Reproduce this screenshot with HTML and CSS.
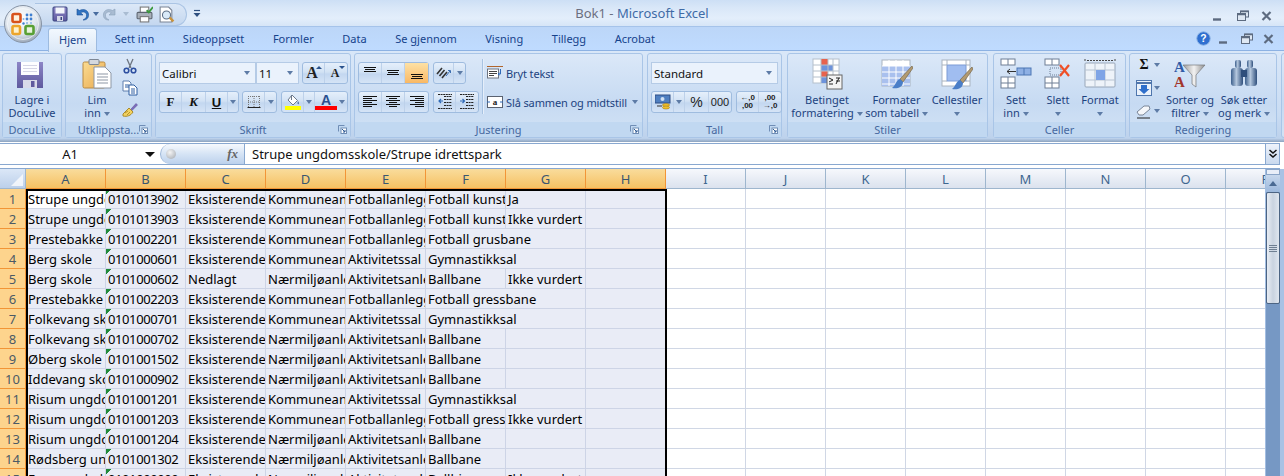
FILE: index.html
```html
<!DOCTYPE html>
<html lang="nb">
<head>
<meta charset="utf-8">
<title>Bok1 - Microsoft Excel</title>
<link rel="stylesheet" href="styles.css">
</head>
<body>
<svg class="defs" aria-hidden="true">
  <defs>
    <radialGradient id="orb" cx="45%" cy="35%" r="70%"><stop offset="0" stop-color="#ffffff"/><stop offset=".6" stop-color="#dfe6ee"/><stop offset="1" stop-color="#8f9db0"/></radialGradient>
    <linearGradient id="disk" x1="0" y1="0" x2="0" y2="1"><stop offset="0" stop-color="#8c85c6"/><stop offset="1" stop-color="#5f5a9e"/></linearGradient>
    <linearGradient id="clip" x1="0" y1="0" x2="1" y2="1"><stop offset="0" stop-color="#fbdc92"/><stop offset="1" stop-color="#e9a94e"/></linearGradient>
    <linearGradient id="steel" x1="0" y1="0" x2="1" y2="0"><stop offset="0" stop-color="#3c5f8c"/><stop offset=".45" stop-color="#b5c8de"/><stop offset="1" stop-color="#2f4f7c"/></linearGradient>
    <linearGradient id="funnel" x1="0" y1="0" x2="1" y2="0"><stop offset="0" stop-color="#9a9a9a"/><stop offset=".5" stop-color="#f2f2f2"/><stop offset="1" stop-color="#8d8d8d"/></linearGradient>
    <symbol id="a-top" viewBox="0 0 16 16"><path d="M2 2.500h12M3 4.500h10M2 6.500h12" stroke="#111" fill="none"/></symbol>
    <symbol id="a-mid" viewBox="0 0 16 16"><path d="M2 5.500h12M3 7.500h10M2 9.500h12" stroke="#111" fill="none"/></symbol>
    <symbol id="a-bot" viewBox="0 0 16 16"><path d="M2 9.500h12M3 11.500h10M2 13.500h12" stroke="#111" fill="none"/></symbol>
    <symbol id="a-left" viewBox="0 0 16 16"><path d="M1 2.500h14M1 4.500h9M1 6.500h14M1 8.500h9M1 10.500h14M1 12.500h9" stroke="#111" fill="none"/></symbol>
    <symbol id="a-center" viewBox="0 0 16 16"><path d="M1 2.500h14M4 4.500h8M1 6.500h14M4 8.500h8M1 10.500h14M4 12.500h8" stroke="#111" fill="none"/></symbol>
    <symbol id="a-right" viewBox="0 0 16 16"><path d="M1 2.500h14M6 4.500h9M1 6.500h14M6 8.500h9M1 10.500h14M6 12.500h9" stroke="#111" fill="none"/></symbol>
    <symbol id="launch" viewBox="0 0 9 9"><path d="M.5.500h6M.5.500v6" stroke="#6f8db5" fill="none"/><rect x="3" y="3" width="5.500" height="5.500" fill="#fff" stroke="#6f8db5"/><path d="M4 4l3 3M7 5v2H5" stroke="#2e5a94" fill="none"/></symbol>
    <symbol id="min" viewBox="0 0 14 12"><path d="M1 9.500h8" stroke="#5d6b80" stroke-width="2.400"/></symbol>
    <symbol id="rest" viewBox="0 0 14 12"><rect x="4.500" y="1" width="8" height="6" fill="#dfe8f3" stroke="#5d6b80"/><rect x="1.500" y="3.500" width="8" height="7" fill="#dfe8f3" stroke="#5d6b80"/><path d="M1.500 4.500h8M4.500 1.500h8" stroke="#5d6b80" stroke-width="1.400"/></symbol>
    <symbol id="close" viewBox="0 0 14 12"><path d="M2.500 2l8 8M10.500 2l-8 8" stroke="#5d6b80" stroke-width="2.200"/></symbol>
  </defs>
</svg>

<div class="app">
  <svg class="orb" viewBox="0 0 40 40" aria-hidden="true">
    <circle cx="20" cy="20" r="18.500" fill="url(#orb)" stroke="#8794a6"/>
    <circle cx="20" cy="20" r="15.500" fill="none" stroke="#f7f9fb" stroke-opacity=".7"/>
    <rect x="9.500" y="10" width="8" height="8" rx="1.500" fill="#fff2dd" stroke="#d8521b" stroke-width="2.600"/>
    <rect x="9.500" y="22" width="7.500" height="8" rx="1.500" fill="#fff2cc" stroke="#eda52a" stroke-width="2.600"/>
    <rect x="22.500" y="22" width="8" height="8" rx="1.500" fill="#e8f3dc" stroke="#58a034" stroke-width="2.600"/>
    <g fill="#3f7fd0"><circle cx="24" cy="11" r="1.400"/><circle cx="28" cy="11" r="1.400"/><circle cx="24" cy="15" r="1.400"/><circle cx="28" cy="15" r="1.400"/><circle cx="20.500" cy="19.500" r="1.200"/></g>
    <g fill="#89b4e0"><circle cx="20.500" cy="15" r="1"/><circle cx="24" cy="19" r="1"/><circle cx="28" cy="19" r="1"/></g>
  </svg>

  <header class="titlebar">
    <div class="title-left">
      <div class="qat">
        <svg class="ic16" viewBox="0 0 16 16"><rect x="1" y="1" width="14" height="14" rx="1" fill="url(#disk)" stroke="#38437f"/><rect x="3.500" y="1.500" width="9" height="6" fill="#f3f5fb"/><rect x="5" y="10" width="6" height="5" fill="#d5d8e8"/><rect x="8.500" y="11" width="1.500" height="3" fill="#38437f"/></svg>
        <svg class="ic16 q-undo" viewBox="0 0 16 16"><path d="M3 3v6h6L6.700 6.800C9 5 12 6 12.500 8.500 13 11 11.500 13 9 14c4 .2 6-2.500 5.500-6C14 4 9.500 2.500 5.500 4.500z" fill="#2f74c4" stroke="#1c4f91" stroke-width=".6"/></svg>
        <i class="arr q-a"></i>
        <svg class="ic16 q-redo" viewBox="0 0 16 16"><path d="M13 3v6H7l2.300-2.200C7 5 4 6 3.500 8.500 3 11 4.500 13 7 14 3 14.200 1 11.500 1.500 8 2 4 6.500 2.500 10.500 4.500z" fill="#a9bcd2" stroke="#8ba1ba" stroke-width=".6"/></svg>
        <i class="arr arr-off q-a"></i>
        <svg class="ic16 q-print" viewBox="0 0 16 16"><rect x="4" y="1" width="8" height="6" fill="#fff" stroke="#777"/><rect x="1" y="6" width="14" height="6" rx="1" fill="#a9b0ba" stroke="#5d6570"/><rect x="4" y="10" width="8" height="5" fill="#fff" stroke="#777"/><path d="M10 4l2 2 4-5" stroke="#3d9a3d" stroke-width="1.800" fill="none"/></svg>
        <svg class="ic16 q-prev" viewBox="0 0 16 16"><path d="M2 1h8l3 3v11H2z" fill="#fff" stroke="#7a8494"/><circle cx="8" cy="8.500" r="3.800" fill="#d9eaf9" stroke="#5d6f86"/><path d="M11 11l3.500 3.500" stroke="#c9933b" stroke-width="2.200"/></svg>
      </div>
      <svg class="q-custom" viewBox="0 0 8 10"><path d="M1 1.500h6" stroke="#2d4f80" stroke-width="1.200"/><path d="M.5 4h7L4 8z" fill="#2d4f80"/></svg>
    </div>
    <h1 class="title"><span class="t-doc">Bok1</span> <span class="t-sep">-</span> <span class="t-app">Microsoft Excel</span></h1>
    <div class="win">
      <svg class="wc"><use href="#min"/></svg>
      <svg class="wc"><use href="#rest"/></svg>
      <svg class="wc"><use href="#close"/></svg>
    </div>
  </header>

  <nav class="tabs">
    <a class="tab tab-on">Hjem</a>
    <a class="tab">Sett inn</a>
    <a class="tab">Sideoppsett</a>
    <a class="tab">Formler</a>
    <a class="tab">Data</a>
    <a class="tab">Se gjennom</a>
    <a class="tab">Visning</a>
    <a class="tab">Tillegg</a>
    <a class="tab">Acrobat</a>
    <div class="tabs-right">
      <svg class="help" viewBox="0 0 16 16"><circle cx="8" cy="8" r="7.200" fill="#2f6fd0" stroke="#8fb4e4"/><text x="8" y="12" class="help-q">?</text></svg>
      <svg class="wc"><use href="#min"/></svg>
      <svg class="wc"><use href="#rest"/></svg>
      <svg class="wc"><use href="#close"/></svg>
    </div>
  </nav>

  <section class="ribbon">
    <div class="group g-docu">
      <div class="gbody">
        <div class="big w-full">
          <svg class="bigic" viewBox="2 -1 32 32"><path d="M3 3h26v26H3z" fill="url(#disk)"/><rect x="7" y="3" width="18" height="13" fill="#fdfdff"/><path d="M9 6.500h14M9 9.500h14M9 12.500h14" stroke="#d5d5e6"/><rect x="9" y="21" width="14" height="8" fill="#d9dbe9"/><rect x="17" y="22" width="3.500" height="6" fill="#5f5a9e"/></svg>
          <span>Lagre i</span><span>DocuLive</span>
        </div>
      </div>
      <div class="glabel">DocuLive</div>
    </div>

    <div class="group g-clip">
      <div class="gbody">
        <div class="big w-paste">
          <svg class="bigic" viewBox="0 0 32 32"><rect x="2" y="4" width="22" height="26" rx="1.500" fill="url(#clip)" stroke="#b98a43"/><rect x="8" y="1.500" width="10" height="5" rx="1" fill="#d4d8de" stroke="#7d8794"/><path d="M13 9h11l6 6v15H13z" fill="#fff" stroke="#8d97a5"/><path d="M16 16h11M16 19h11M16 22h11M16 25h11" stroke="#8d97a5"/></svg>
          <span>Lim</span><span>inn <i class="arr"></i></span>
        </div>
        <div class="smalls s-clip">
          <svg class="ic16" viewBox="0 0 16 16"><path d="M5 1l4 9M11 1L7 10" stroke="#6d7580" stroke-width="1.300"/><circle cx="4.500" cy="12.500" r="2.300" fill="none" stroke="#2d4fa0" stroke-width="1.600"/><circle cx="11.500" cy="12.500" r="2.300" fill="none" stroke="#2d4fa0" stroke-width="1.600"/></svg>
          <svg class="ic16" viewBox="0 0 16 16"><path d="M1 1h6l2 2v8H1z" fill="#fff" stroke="#5e7fae"/><path d="M3 5h4M3 7h4" stroke="#2f5ea2"/><path d="M7 5h5l3 3v7H7z" fill="#fff" stroke="#2f5ea2"/><path d="M9 9h4M9 11h4M9 13h4" stroke="#2f5ea2"/></svg>
          <svg class="ic16" viewBox="0 0 16 16"><path d="M9 7L14 1.500l1.500 1.500L10 8.500z" fill="#7c6cbc" stroke="#54468f" stroke-width=".5"/><path d="M1 12l6-6 4 4c-2 3.500-6 5-10 4z" fill="#f3d25f" stroke="#a98a2c"/><path d="M3 11l3-2M5 13l3-3" stroke="#b5922f"/></svg>
        </div>
      </div>
      <div class="glabel">Utklippsta...<svg class="launch"><use href="#launch"/></svg></div>
    </div>

    <div class="group g-font">
      <div class="gbody rows">
        <div class="row">
          <div class="combo c-font"><span>Calibri</span><i class="arr"></i></div>
          <div class="combo c-size"><span>11</span><i class="arr"></i></div>
          <div class="bgroup bg-ml3">
            <div class="btn w22 grow">A<i class="up"></i></div>
            <div class="btn w22 shrink">A<i class="dn"></i></div>
          </div>
        </div>
        <div class="row">
          <div class="bgroup">
            <div class="btn w22 bold">F</div>
            <div class="btn w24 ital">K</div>
            <div class="btn w22 under">U</div>
            <div class="btn w10"><i class="arr"></i></div>
          </div>
          <div class="bgroup bg-ml3">
            <div class="btn w22"><svg class="ic16" viewBox="0 0 16 16"><path d="M2.500 2v11M8 2v11M13.500 2v11M2 2.500h12M2 8h12" stroke="#777" stroke-dasharray="1 1" fill="none"/><path d="M1.500 13.500h13" stroke="#222"/></svg></div>
            <div class="btn w11"><i class="arr"></i></div>
          </div>
          <div class="bgroup bg-ml4">
            <div class="btn w22"><svg class="ic16" viewBox="0 0 16 16"><path d="M7 1l5.500 5.500L8 11 3 6z" fill="#fff" stroke="#6d7a8c"/><path d="M6.500 1v5" stroke="#6d7a8c"/><path d="M13 7c1 1.500 1.500 2.500.5 3.300-1 .3-1.500-1.300-.5-3.300z" fill="#5175a8"/><rect x="0" y="12" width="16" height="4" fill="#ffff00"/></svg></div>
            <div class="btn w11"><i class="arr"></i></div>
            <div class="btn w22 fcolor">A</div>
            <div class="btn w10"><i class="arr"></i></div>
          </div>
        </div>
      </div>
      <div class="glabel">Skrift<svg class="launch"><use href="#launch"/></svg></div>
    </div>

    <div class="group g-align">
      <div class="gbody align-body">
        <div class="rows r-flat">
          <div class="row">
            <div class="bgroup">
              <div class="btn w23"><svg class="ic16"><use href="#a-top"/></svg></div>
              <div class="btn w23"><svg class="ic16"><use href="#a-mid"/></svg></div>
              <div class="btn w23 btn-on"><svg class="ic16"><use href="#a-bot"/></svg></div>
            </div>
            <div class="bgroup bg-ml4">
              <div class="btn w20"><svg class="ic16" viewBox="0 0 16 16"><g stroke="#333" stroke-width="1.600"><path d="M1 9l5-6M3.500 11l5-6M6 13l5-6"/></g><path d="M10 11l4-5M12 5.500h2.500V8" stroke="#3a6db0" fill="none"/></svg></div>
              <div class="btn w11"><i class="arr"></i></div>
            </div>
          </div>
          <div class="row">
            <div class="bgroup">
              <div class="btn w23"><svg class="ic16"><use href="#a-left"/></svg></div>
              <div class="btn w23"><svg class="ic16"><use href="#a-center"/></svg></div>
              <div class="btn w23"><svg class="ic16"><use href="#a-right"/></svg></div>
            </div>
            <div class="bgroup bg-ml4">
              <div class="btn w22"><svg class="ic16" viewBox="0 0 16 16"><path d="M7 2.500h8M7 5.500h8M7 8.500h8M7 11.500h8M1 .5h14M1 14.500h14" stroke="#222" stroke-dasharray="2 .6"/><path d="M6 7H2M4 5L2 7l2 2" stroke="#2f6ab8" fill="none" stroke-width="1.200"/></svg></div>
              <div class="btn w22"><svg class="ic16" viewBox="0 0 16 16"><path d="M7 2.500h8M7 5.500h8M7 8.500h8M7 11.500h8M1 .5h14M1 14.500h14" stroke="#222" stroke-dasharray="2 .6"/><path d="M1 7h4M3.500 5l2 2-2 2" stroke="#2f6ab8" fill="none" stroke-width="1.200"/></svg></div>
            </div>
          </div>
        </div>
        <div class="vsep"></div>
        <div class="rows r-flat">
          <div class="row wide"><svg class="ic16" viewBox="0 0 16 16"><path d="M0 1.500h16" stroke="#b1652c"/><rect x=".5" y="4" width="11" height="9" fill="#fff" stroke="#6f7580"/><path d="M2 6.500h8M2 8.500h8M2 10.500h5" stroke="#444"/><path d="M13.500 4v5h-2M12.500 8l-1.500 1 1.500 1" stroke="#2f6ab8" fill="none"/></svg><span class="lab">Bryt tekst</span></div>
          <div class="row wide"><svg class="ic16" viewBox="0 0 16 16"><rect x=".5" y="2.500" width="15" height="11" fill="#fff" stroke="#5a6270"/><text x="8" y="11" class="merge-a">a</text><path d="M0 8h3M13 8h3" stroke="#2f6ab8"/></svg><span class="lab">Slå sammen og midtstill</span><i class="arr lab-arr"></i></div>
        </div>
      </div>
      <div class="glabel">Justering<svg class="launch"><use href="#launch"/></svg></div>
    </div>

    <div class="group g-num">
      <div class="gbody rows">
        <div class="row"><div class="combo c-num"><span>Standard</span><i class="arr"></i></div></div>
        <div class="row">
          <div class="bgroup">
            <div class="btn w22"><svg class="ic16" viewBox="0 0 16 16"><rect x="0" y="1" width="15" height="8" fill="#4f7fc0" stroke="#2e4f86"/><circle cx="7.500" cy="5" r="2" fill="#cfe0f3"/><ellipse cx="11" cy="11" rx="3.500" ry="1.500" fill="#f1c12f" stroke="#a47b12" stroke-width=".6"/><ellipse cx="11" cy="13.500" rx="3.500" ry="1.500" fill="#f1c12f" stroke="#a47b12" stroke-width=".6"/><path d="M2 12h5" stroke="#333"/></svg></div>
            <div class="btn w11"><i class="arr"></i></div>
            <div class="btn w24 sym">%</div>
            <div class="btn w22 sym sym-s">000</div>
          </div>
          <div class="bgroup bg-ml4">
            <div class="btn w22 dec"><span>←,0</span><span>,00</span></div>
            <div class="btn w22 dec"><span>,00</span><span>→,0</span></div>
          </div>
        </div>
      </div>
      <div class="glabel">Tall<svg class="launch"><use href="#launch"/></svg></div>
    </div>

    <div class="group g-style">
      <div class="gbody gb-style">
        <div class="big w-cond">
          <svg class="bigic" viewBox="0 0 32 32"><g fill="#fff" stroke="#b5c0cc"><rect x="2" y="1" width="26" height="24"/></g><path d="M10 1h7v6h-7zM10 13h7v6h-7z" fill="#e8624d"/><path d="M10 7h12v6H10zM10 19h7v6h-7z" fill="#6d93dc"/><path d="M2 7h26M2 13h26M2 19h26M10 1v24M17 1v24M22 1v24" stroke="#b5c0cc" fill="none"/><rect x="16" y="17" width="15" height="14" fill="#f4f4f4" stroke="#666"/><path d="M18 20l4 2-4 2M18 26h4M25 20h4M25 23h4M25 26l3-6" stroke="#222" fill="none"/></svg>
          <span>Betinget</span><span>formatering <i class="arr"></i></span>
        </div>
        <div class="big w-tab">
          <svg class="bigic" viewBox="0 0 32 32"><rect x="1" y="2" width="28" height="26" fill="#fff" stroke="#aab4c0"/><rect x="1" y="8" width="28" height="20" fill="#a9c0ee"/><path d="M1 8h28M1 14h28M1 20h28M1 26h28M8 2v26M15 2v26M22 2v26" stroke="#fff"/><path d="M31 8L19 21l3 3L32 10z" fill="#b29a72" stroke="#6c5a3a" stroke-width=".6"/><path d="M11 30c5 1 11-.5 11-6l-3-3c-4 1-4 6-8 9z" fill="#4a7ec8"/></svg>
          <span>Formater</span><span>som tabell <i class="arr"></i></span>
        </div>
        <div class="big w-cell">
          <svg class="bigic" viewBox="0 0 32 32"><rect x="1" y="2" width="28" height="26" fill="#fff" stroke="#aab4c0"/><rect x="6" y="7" width="19" height="16" fill="#a0bdf0" stroke="#7d9cd6"/><path d="M1 7h5M25 7h4M1 23h5M25 23h4M6 2v5M25 2v5" stroke="#aab4c0"/><path d="M31 9L19 22l3 3L32 11z" fill="#b29a72" stroke="#6c5a3a" stroke-width=".6"/><path d="M11 31c5 1 11-.5 11-6l-3-3c-4 1-4 6-8 9z" fill="#4a7ec8"/></svg>
          <span>Cellestiler</span><span><i class="arr"></i></span>
        </div>
      </div>
      <div class="glabel">Stiler</div>
    </div>

    <div class="group g-cell">
      <div class="gbody gb-cell">
        <div class="big w42">
          <svg class="bigic" viewBox="0 0 32 32"><g fill="#fff" stroke="#6f7f95"><rect x="1" y="1" width="14" height="6"/><rect x="1" y="19" width="14" height="11"/></g><path d="M8 1v6M8 19v11M1 25h14" stroke="#6f7f95"/><rect x="17" y="10" width="14" height="7" fill="#8eb0e4" stroke="#4c76b4"/><path d="M24 10v7" stroke="#4c76b4"/><path d="M16 13.500H7M10 11l-3 2.500 3 2.500" stroke="#333" fill="none"/></svg>
          <span>Sett</span><span>inn <i class="arr"></i></span>
        </div>
        <div class="big w42">
          <svg class="bigic" viewBox="0 0 32 32"><g fill="#fff" stroke="#6f7f95"><rect x="3" y="1" width="14" height="6"/><rect x="3" y="19" width="14" height="11"/></g><path d="M10 1v6M10 19v11M3 25h14" stroke="#6f7f95"/><path d="M8 10h11v7H8z" fill="none" stroke="#6f7f95" stroke-dasharray="1 1"/><path d="M18 7l9 11M27 7l-9 11" stroke="#ef4f27" stroke-width="2.200"/></svg>
          <span>Slett</span><span><i class="arr"></i></span>
        </div>
        <div class="big w42">
          <svg class="bigic" viewBox="0 0 32 32"><path d="M1 1v3M31 1v3M3 2.500h26" stroke="#444" stroke-dasharray="2 1"/><rect x="1" y="5" width="30" height="24" rx="1" fill="#eef3f9" stroke="#98a6b8"/><path d="M1 12h30M1 22h30M11 5v24M21 5v24" stroke="#b7c3d2"/><rect x="12" y="12" width="9" height="10" fill="#7fa4e6"/></svg>
          <span>Format</span><span><i class="arr"></i></span>
        </div>
      </div>
      <div class="glabel">Celler</div>
    </div>

    <div class="group g-edit">
      <div class="gbody gb-edit">
        <div class="smalls s-edit">
          <div class="sm"><span class="sigma">Σ</span><i class="arr"></i></div>
          <div class="sm"><svg class="ic16" viewBox="0 0 16 16"><rect x=".5" y=".5" width="15" height="15" fill="#eaf1fa" stroke="#4f76ad"/><path d="M.5 3h15" stroke="#4f76ad" stroke-width="2"/><path d="M5 5h6v4h2.500L8 14 2.500 9H5z" fill="#2f6fcb"/></svg><i class="arr"></i></div>
          <div class="sm"><svg class="ic16" viewBox="0 0 16 16"><path d="M1 9l7-6h5l1 3-7 6H3z" fill="#f5f7fa" stroke="#7a8698"/><path d="M1 15h13" stroke="#222"/></svg><i class="arr"></i></div>
        </div>
        <div class="big w-sort">
          <svg class="bigic" viewBox="0 0 32 32"><text x="0" y="14" class="sort-a">A</text><text x="0" y="29" class="sort-z">A</text><path d="M9 7h22l-9 10v12l-4-3v-9z" fill="url(#funnel)" stroke="#77797c" stroke-width=".7"/></svg>
          <span>Sorter og</span><span>filtrer <i class="arr"></i></span>
        </div>
        <div class="big w-find">
          <svg class="bigic" viewBox="0 0 32 32"><rect x="7" y="2" width="6" height="8" rx="2" fill="url(#steel)"/><rect x="19" y="2" width="6" height="8" rx="2" fill="url(#steel)"/><rect x="3" y="10" width="12" height="18" rx="3" fill="url(#steel)"/><rect x="17" y="10" width="12" height="18" rx="3" fill="url(#steel)"/><rect x="13" y="12" width="6" height="7" fill="#2f4f7c"/></svg>
          <span>Søk etter</span><span>og merk <i class="arr"></i></span>
        </div>
      </div>
      <div class="glabel">Redigering</div>
    </div>
    <div class="group g-end"></div>
  </section>

  <section class="formula">
    <div class="fb-row">
      <div class="namebox"><span>A1</span><i class="arr arr-k"></i></div>
      <div class="fx"><span class="fx-ball"></span><span class="fx-t">fx</span></div>
      <div class="fb-input">Strupe ungdomsskole/Strupe idrettspark</div>
      <div class="fb-exp"><svg viewBox="0 0 10 10"><path d="M1.500 1l3.500 3 3.500-3M1.500 5l3.500 3 3.500-3" fill="none" stroke="#111" stroke-width="1.500"/></svg></div>
    </div>
    <div class="fb-gap"></div>
  </section>

  <main class="sheet">
    <div class="gridwrap">
      <table class="grid">
        <colgroup><col class="c-h"><col class="c-c"><col class="c-c"><col class="c-c"><col class="c-c"><col class="c-c"><col class="c-c"><col class="c-c"><col class="c-c"><col class="c-c"><col class="c-c"><col class="c-c"><col class="c-c"><col class="c-c"><col class="c-c"><col class="c-c"><col class="c-c"></colgroup>
        <thead>
          <tr><th class="corner"><svg viewBox="0 0 12 12"><path d="M12 0v12H0z" fill="#fff"/></svg></th><th class="hs">A</th><th class="hs">B</th><th class="hs">C</th><th class="hs">D</th><th class="hs">E</th><th class="hs">F</th><th class="hs">G</th><th class="hs">H</th><th>I</th><th>J</th><th>K</th><th>L</th><th>M</th><th>N</th><th>O</th><th>P</th></tr>
        </thead>
        <tbody>
          <tr><th>1</th><td class="active">Strupe ungdomsskole/Strupe idrettspark</td><td class="s tag">0101013902</td><td class="s">Eksisterende</td><td class="s">Kommuneanlegg</td><td class="s">Fotballanlegg</td><td class="s">Fotball kunstgress</td><td class="s">Ja</td><td class="s"></td><td></td><td></td><td></td><td></td><td></td><td></td><td></td><td></td></tr>
          <tr><th>2</th><td class="s">Strupe ungdomsskole/Strupe idrettspark</td><td class="s tag">0101013903</td><td class="s">Eksisterende</td><td class="s">Kommuneanlegg</td><td class="s">Fotballanlegg</td><td class="s">Fotball kunstgress</td><td class="s">Ikke vurdert</td><td class="s"></td><td></td><td></td><td></td><td></td><td></td><td></td><td></td><td></td></tr>
          <tr><th>3</th><td class="s">Prestebakke skole</td><td class="s tag">0101002201</td><td class="s">Eksisterende</td><td class="s">Kommuneanlegg</td><td class="s">Fotballanlegg</td><td class="s" colspan="2">Fotball grusbane</td><td class="s"></td><td></td><td></td><td></td><td></td><td></td><td></td><td></td><td></td></tr>
          <tr><th>4</th><td class="s">Berg skole</td><td class="s tag">0101000601</td><td class="s">Eksisterende</td><td class="s">Kommuneanlegg</td><td class="s">Aktivitetssal</td><td class="s" colspan="2">Gymnastikksal</td><td class="s"></td><td></td><td></td><td></td><td></td><td></td><td></td><td></td><td></td></tr>
          <tr><th>5</th><td class="s">Berg skole</td><td class="s tag">0101000602</td><td class="s">Nedlagt</td><td class="s">Nærmiljøanlegg</td><td class="s">Aktivitetsanlegg</td><td class="s">Ballbane</td><td class="s">Ikke vurdert</td><td class="s"></td><td></td><td></td><td></td><td></td><td></td><td></td><td></td><td></td></tr>
          <tr><th>6</th><td class="s">Prestebakke skole</td><td class="s tag">0101002203</td><td class="s">Eksisterende</td><td class="s">Kommuneanlegg</td><td class="s">Fotballanlegg</td><td class="s" colspan="2">Fotball gressbane</td><td class="s"></td><td></td><td></td><td></td><td></td><td></td><td></td><td></td><td></td></tr>
          <tr><th>7</th><td class="s">Folkevang skole</td><td class="s tag">0101000701</td><td class="s">Eksisterende</td><td class="s">Kommuneanlegg</td><td class="s">Aktivitetssal</td><td class="s" colspan="2">Gymnastikksal</td><td class="s"></td><td></td><td></td><td></td><td></td><td></td><td></td><td></td><td></td></tr>
          <tr><th>8</th><td class="s">Folkevang skole</td><td class="s tag">0101000702</td><td class="s">Eksisterende</td><td class="s">Nærmiljøanlegg</td><td class="s">Aktivitetsanlegg</td><td class="s">Ballbane</td><td class="s"></td><td class="s"></td><td></td><td></td><td></td><td></td><td></td><td></td><td></td><td></td></tr>
          <tr><th>9</th><td class="s">Øberg skole</td><td class="s tag">0101001502</td><td class="s">Eksisterende</td><td class="s">Nærmiljøanlegg</td><td class="s">Aktivitetsanlegg</td><td class="s">Ballbane</td><td class="s"></td><td class="s"></td><td></td><td></td><td></td><td></td><td></td><td></td><td></td><td></td></tr>
          <tr><th>10</th><td class="s">Iddevang skole</td><td class="s tag">0101000902</td><td class="s">Eksisterende</td><td class="s">Nærmiljøanlegg</td><td class="s">Aktivitetsanlegg</td><td class="s">Ballbane</td><td class="s"></td><td class="s"></td><td></td><td></td><td></td><td></td><td></td><td></td><td></td><td></td></tr>
          <tr><th>11</th><td class="s">Risum ungdomsskole</td><td class="s tag">0101001201</td><td class="s">Eksisterende</td><td class="s">Kommuneanlegg</td><td class="s">Aktivitetssal</td><td class="s" colspan="2">Gymnastikksal</td><td class="s"></td><td></td><td></td><td></td><td></td><td></td><td></td><td></td><td></td></tr>
          <tr><th>12</th><td class="s">Risum ungdomsskole</td><td class="s tag">0101001203</td><td class="s">Eksisterende</td><td class="s">Kommuneanlegg</td><td class="s">Fotballanlegg</td><td class="s">Fotball gressbane</td><td class="s">Ikke vurdert</td><td class="s"></td><td></td><td></td><td></td><td></td><td></td><td></td><td></td><td></td></tr>
          <tr><th>13</th><td class="s">Risum ungdomsskole</td><td class="s tag">0101001204</td><td class="s">Eksisterende</td><td class="s">Nærmiljøanlegg</td><td class="s">Aktivitetsanlegg</td><td class="s">Ballbane</td><td class="s"></td><td class="s"></td><td></td><td></td><td></td><td></td><td></td><td></td><td></td><td></td></tr>
          <tr><th>14</th><td class="s">Rødsberg ungdomsskole</td><td class="s tag">0101001302</td><td class="s">Eksisterende</td><td class="s">Nærmiljøanlegg</td><td class="s">Aktivitetsanlegg</td><td class="s">Ballbane</td><td class="s"></td><td class="s"></td><td></td><td></td><td></td><td></td><td></td><td></td><td></td><td></td></tr>
          <tr><th>15</th><td class="s">Fossum skole</td><td class="s tag">0101000000</td><td class="s">Eksisterende</td><td class="s">Nærmiljøanlegg</td><td class="s">Aktivitetsanlegg</td><td class="s">Ballbinge</td><td class="s">Ikke vurdert</td><td class="s"></td><td></td><td></td><td></td><td></td><td></td><td></td><td></td><td></td></tr>
        </tbody>
      </table>
      <div class="range"></div>
    </div>
    <aside class="vscroll">
      <div class="vs-split"></div>
      <div class="vs-up"><i></i></div>
      <div class="vs-thumb"><span></span></div>
    </aside>
    <div class="edge"></div>
  </main>
</div>
</body>
</html>
```

FILE: styles.css
```css
* { box-sizing: border-box; }
html, body { margin: 0; padding: 0; overflow: hidden; }
body { width: 1284px; height: 476px; background: #bfdbff; font-family: "Noto Sans", "Open Sans", sans-serif; font-size: 11px; color: #15428b; }
.defs { position: absolute; width: 0; height: 0; }
.app { position: relative; width: 1284px; height: 476px; display: flex; flex-direction: column; overflow: hidden; }
i { display: block; font-style: normal; }

.arr { display: inline-block; width: 0; height: 0; border-left: 3.5px solid transparent; border-right: 3.5px solid transparent; border-top: 4px solid #5d7ba6; vertical-align: 1px; }
.arr-off { border-top-color: #a9bcd2; }
.arr-k { border-left-width: 5px; border-right-width: 5px; border-top: 5px solid #111; }
.ic16 { width: 16px; height: 16px; flex: none; display: block; }

/* title */
.orb { position: absolute; left: 3px; top: 4px; width: 40px; height: 40px; z-index: 3; }
.titlebar { height: 27px; flex: none; display: grid; grid-template-columns: 1fr auto 1fr; align-items: center; background: linear-gradient(#cddff5, #d9e7f8 30%, #e3eefb 70%, #d6e5f7); border-bottom: 1px solid #a5c3ea; }
.title-left { display: flex; align-items: center; padding-left: 35px; }
.qat { width: 152px; height: 23px; margin-top: 1px; display: flex; align-items: center; padding-left: 17px; border: 1px solid #aac4e4; border-left: 0; border-radius: 0 12px 12px 0; background: linear-gradient(#dce8f7, #c4d7ef); }
.q-undo { margin-left: 6px; }
.q-a { margin-left: 3px; border-top-color: #486c9f; border-left-width: 3px; border-right-width: 3px; }
.arr-off.q-a { margin-left: 5px; border-top-color: #a9bcd2; }
.q-redo { margin-left: 3px; }
.q-print { margin-left: 7px; width: 17px; height: 17px; }
.q-prev { margin-left: 5px; width: 17px; height: 17px; }
.q-custom { width: 8px; height: 10px; margin-left: 6px; }
.title { margin: 0; font-size: 13px; font-weight: 400; line-height: 27px; white-space: nowrap; }
.t-doc, .t-sep { color: #6b6f80; }
.t-app { color: #3f6ba6; }
.win { display: flex; justify-content: flex-end; gap: 10px; padding: 5px 10px 0 0; }
.wc { width: 14px; height: 12px; display: block; }

/* tabs */
.tabs { height: 24px; flex: none; display: flex; padding-left: 48px; background: linear-gradient(#bcd6f8, #bfdbff); border-bottom: 1px solid #8db2e3; position: relative; }
.tab { height: 24px; padding: 2px 14.300px 0; line-height: 20px; color: #15428b; font-size: 11px; white-space: nowrap; }
.tab-on { height: 24px; margin-top: 1px; margin-right: 3px; padding: 1px 10px 0; background: linear-gradient(#f2f8fe, #dbe8f7); border: 1px solid #9dbbe0; border-bottom: 0; border-radius: 3px 3px 0 0; }
.tabs-right { margin-left: auto; display: flex; align-items: center; gap: 8px; padding-right: 8px; }
.help { width: 15px; height: 15px; margin-right: -1px; }
.help-q { fill: #fff; font: 700 11px "Liberation Sans", sans-serif; text-anchor: middle; }

/* ribbon */
.ribbon { height: 91px; flex: none; display: flex; padding: 2px 0 0 2px; gap: 3px; background: linear-gradient(#d9e7f8, #c9dcf3 70%, #bdd2ec 96%, #8ca3bf); }
.group { height: 85px; flex: none; display: flex; flex-direction: column; border: 1px solid #a9c5e7; border-radius: 3px; background: linear-gradient(#dbe8f8, #c6daf2 60%, #d3e3f5); }
.gbody { height: 68px; flex: none; display: flex; }
.glabel { position: relative; flex: 1; text-align: center; line-height: 15px; font-size: 11px; color: #46689f; background: #c1d8f1; white-space: nowrap; }
.launch { position: absolute; right: 3px; top: 3px; width: 9px; height: 9px; }
.g-docu { width: 60px; }
.g-clip { width: 87px; }
.g-font { width: 196px; }
.g-align { width: 289px; margin-right: 1px; }
.g-num { width: 135px; margin-right: 2px; }
.g-style { width: 201px; margin-right: 2px; }
.g-cell { width: 133px; }
.g-edit { width: 148px; margin-right: 1px; }
.g-end { width: 20px; }

.big { display: flex; flex-direction: column; align-items: center; padding-top: 4px; line-height: 13px; white-space: nowrap; color: #1d437f; font-size: 11px; }
.bigic { width: 32px; height: 32px; display: block; margin-bottom: 3px; flex: none; }
.big span { height: 13px; }
.w-full { width: 100%; }
.w-paste { width: 50px; margin-left: 6px; }
.smalls { display: flex; flex-direction: column; }
.s-clip { padding-top: 4px; gap: 6px; }
.s-edit { width: 25px; padding-top: 3px; margin-left: 6px; gap: 7px; }
.sm { height: 16px; display: flex; align-items: center; gap: 2px; }
.sigma { width: 16px; text-align: center; font: 700 14px/16px "Liberation Serif", serif; color: #111; }

.rows { flex-direction: column; padding: 8px 0 0 3px; gap: 7px; }
.r-flat { display: flex; }
.row { height: 22px; display: flex; align-items: stretch; }
.wide { align-items: center; }
.lab { margin-left: 3px; color: #1d437f; white-space: nowrap; letter-spacing: -.12px; }
.lab-arr { margin-left: 5px; }

.combo { display: flex; align-items: center; justify-content: space-between; padding: 0 5px 0 2px; background: #eaf2fc; border: 1px solid #b5cbe6; color: #111; font-size: 11.500px; }
.c-font { width: 97px; }
.c-size { width: 43px; margin-left: 0; }
.c-num { width: 127px; }
.bgroup { display: flex; border: 1px solid #9fbcdf; border-radius: 3px; background: linear-gradient(#e5effb, #d2e2f4 45%, #c3d7f0 55%, #d5e4f6); }
.bg-ml3 { margin-left: 3px; }
.bg-ml4 { margin-left: 4px; }
.btn { display: flex; align-items: center; justify-content: center; position: relative; border-right: 1px solid #bdd1ea; color: #222; }
.btn:last-child { border-right: 0; }
.btn-on { background: linear-gradient(#fde1a5, #f9b864); }
.w10 { width: 10px; } .w11 { width: 11px; } .w20 { width: 20px; } .w22 { width: 22px; } .w23 { width: 23px; } .w24 { width: 24px; }
.grow { font: 700 16px "Liberation Serif", serif; color: #222; padding-right: 3px; }
.shrink { font: 700 12px "Liberation Serif", serif; color: #222; padding-right: 2px; }
.up, .dn { position: absolute; right: 2px; top: 3px; width: 0; height: 0; border-left: 3px solid transparent; border-right: 3px solid transparent; }
.up { border-bottom: 3px solid #2a528c; }
.dn { border-top: 3px solid #2a528c; }
.bold { font: 700 13px "Liberation Serif", serif; color: #111; }
.ital { font: italic 700 13px "Liberation Serif", serif; color: #111; }
.under { font: 700 13px "Liberation Sans", sans-serif; color: #111; text-decoration: underline; }
.fcolor { font: 700 14px/14px "Liberation Sans", sans-serif; color: #2a4f8f; border-bottom: 4px solid #ff0000; height: 16px; margin-top: 2px; border-right: 0; }
.sym { font: 400 14px "Liberation Sans", sans-serif; color: #222; }
.sym-s { font-size: 11px; }
.dec { flex-direction: column; font: 700 8px/8px "Liberation Sans", sans-serif; color: #222; }

.align-body { padding: 8px 0 0 3px; }
.align-body .rows { padding: 0; }
.vsep { width: 1px; height: 55px; margin: -3px 4px 0 3px; background: #a8c3e2; box-shadow: 1px 0 0 #e5eefa; }
.merge-a { font: 700 9px "Liberation Serif", serif; fill: #222; text-anchor: middle; }

.gb-style { padding-left: 4px; }
.w-cond { width: 70px; } .w-tab { width: 69px; } .w-cell { width: 52px; }
.gb-cell { padding-left: 1px; }
.w42 { width: 42px; }
.w-sort { width: 58px; } .w-find { width: 50px; }
.sort-a { font: 700 15px "Liberation Serif", serif; fill: #2f5ba6; }
.sort-z { font: 700 15px "Liberation Serif", serif; fill: #a2372d; }

/* formula */
.formula { height: 27px; flex: none; display: flex; flex-direction: column; background: #fff; padding: 1px 4px 0 0; }
.fb-row { height: 22px; flex: none; display: flex; background: #fff; border-top: 1px solid #89a8d0; border-bottom: 1px solid #89a8d0; }
.namebox { width: 158px; display: flex; align-items: center; justify-content: center; position: relative; color: #111; font: 13px/20px "Noto Sans", sans-serif; padding-right: 18px; }
.namebox .arr { position: absolute; right: 3px; top: 8px; }
.fx { width: 85px; display: flex; align-items: center; justify-content: space-between; padding: 0 6px 0 5px; background: linear-gradient(#f6f9fd, #d6e4f5 50%, #bcd1ec); border-radius: 11px 0 0 11px; border-left: 1px solid #9cb6d8; margin-left: 2px; border-right: 1px solid #89a8d0; }
.fx-ball { width: 10px; height: 10px; border-radius: 50%; background: radial-gradient(circle at 40% 35%, #f4f4f4, #a0a6ae); }
.fx-t { font: italic 700 13px "Liberation Serif", serif; color: #666; }
.fb-input { flex: 1; padding-left: 7px; font: 13px/20px "Noto Sans", sans-serif; color: #111; }
.fb-exp { width: 15px; display: flex; align-items: center; justify-content: center; background: linear-gradient(#eef3fb, #c9d9ee); border-left: 1px solid #89a8d0; border-right: 1px solid #89a8d0; }
.fb-exp svg { width: 10px; height: 10px; }
.fb-gap { height: 4px; flex: none; background: #fff; border-bottom: 1px solid #89a8d0; }

/* sheet */
.sheet { flex: 1; min-height: 0; display: flex; background: #fff; }
.gridwrap { position: relative; width: 1265px; overflow: hidden; flex: none; }
.grid { width: 1306px; table-layout: fixed; border-collapse: separate; border-spacing: 0; font: 13px "Noto Sans", sans-serif; color: #000; }
.c-h { width: 26px; } .c-c { width: 80px; }
.grid th { height: 20px; padding: 1px 0 0; font-weight: 400; text-align: center; font-size: 13px; line-height: 18px; color: #3e668f; background: linear-gradient(#f6f8fc, #dbe2ee); border-right: 1px solid #9eb6ce; border-bottom: 1px solid #9eb6ce; }
.grid .hs { background: linear-gradient(#f9dc9c, #f6c163); border-right-color: #f29536; border-bottom-color: #f29536; color: #3a5670; }
.grid .corner { background: linear-gradient(#dbe7f7, #bcd0ea); border-right: 1px solid #9eb6ce; position: relative; }
.corner svg { position: absolute; right: 2px; bottom: 2px; width: 12px; height: 12px; opacity: .75; }
.grid tbody th { background: #fdd48d; border-right-color: #f29536; border-bottom-color: #f29536; color: #4b5a66; }
.grid td { height: 20px; padding: 1px 0 0 2px; overflow: hidden; white-space: nowrap; line-height: 18px; border-right: 1px solid #d0d7e5; border-bottom: 1px solid #d0d7e5; }
.grid td.s { background: #e9ecf6; border-right-color: #cdd4e6; border-bottom-color: #cdd4e6; }
.grid td.active { background: #fff; }
.grid td.tag { letter-spacing: -.4px; background-image: linear-gradient(135deg, #218a3a 4px, transparent 4px); }
.range { position: absolute; left: 26px; top: 20px; width: 641px; height: 320px; border: 2px solid #000; border-bottom: 0; pointer-events: none; }
.vscroll { width: 15px; flex: none; display: flex; flex-direction: column; align-items: center; background: #7698c4; border-left: 1px solid #a3bee2; }
.vs-split { width: 14px; height: 6px; background: #e8eef8; border: 1px solid #8aa5c8; }
.vs-up { width: 14px; height: 17px; display: flex; align-items: center; justify-content: center; background: linear-gradient(#c6d7ec, #9cb8dc); }
.vs-up i { width: 0; height: 0; border-left: 4px solid transparent; border-right: 4px solid transparent; border-bottom: 5px solid #4a6a92; }
.vs-thumb { width: 14px; height: 112px; display: flex; align-items: center; justify-content: center; border: 1px solid #4c6483; border-radius: 2px; background: linear-gradient(90deg, #e8edf4, #c9d3e0 50%, #dfe6ef); }
.vs-thumb span { width: 8px; height: 7px; background: repeating-linear-gradient(#6f7f92 0 1px, transparent 1px 2px); }
.edge { width: 4px; flex: none; background: #a9c2e4; }
```
